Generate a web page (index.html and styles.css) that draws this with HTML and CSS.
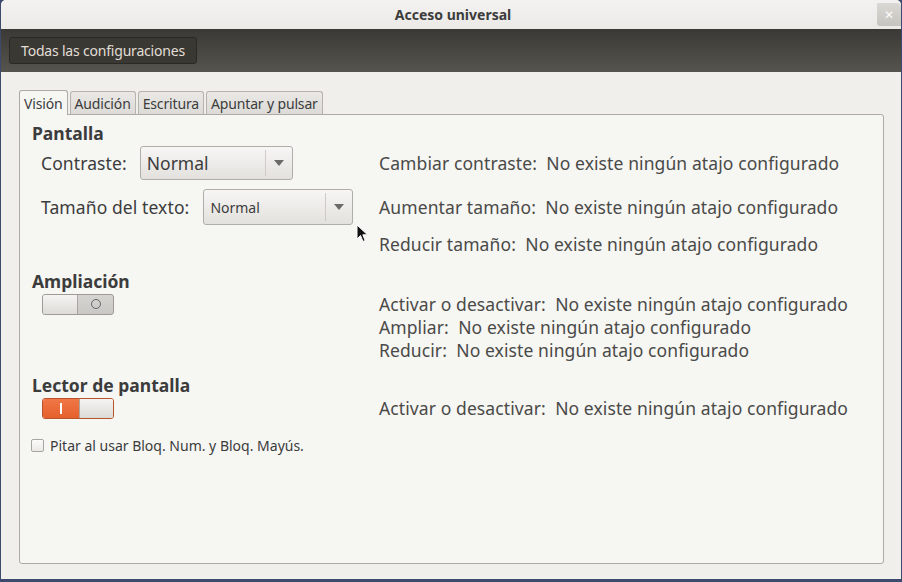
FILE: index.html
```html
<!DOCTYPE html>
<html lang="es">
<head>
<meta charset="utf-8">
<title>Acceso universal</title>
<link rel="stylesheet" href="styles.css">
</head>
<body>
<div class="window">
  <div class="titlebar">
    <span class="title">Acceso universal</span>
    <span class="close">&#x2715;</span>
  </div>
  <div class="toolbar">
    <button class="tb-btn">Todas las configuraciones</button>
  </div>
  <div class="content">
    <div class="tabs">
      <div class="tab active">Visión</div>
      <div class="tab">Audición</div>
      <div class="tab">Escritura</div>
      <div class="tab">Apuntar y pulsar</div>
    </div>
    <div class="panel">
      <div class="row r1">
        <div class="left"><span class="heading">Pantalla</span></div>
        <div class="right"></div>
      </div>
      <div class="row r2">
        <div class="left"><span class="label">Contraste:</span>
          <div class="combo combo-a"><span class="combo-text">Normal</span><span class="combo-sep"></span><span class="arrow"></span></div>
        </div>
        <div class="right shortcut">Cambiar contraste:&nbsp; No existe ningún atajo configurado</div>
      </div>
      <div class="row r3">
        <div class="left"><span class="label">Tamaño del texto:</span>
          <div class="combo combo-b"><span class="combo-text small">Normal</span><span class="combo-sep"></span><span class="arrow"></span></div>
        </div>
        <div class="right shortcut">Aumentar tamaño:&nbsp; No existe ningún atajo configurado</div>
      </div>
      <div class="row r4">
        <div class="left"></div>
        <div class="right shortcut">Reducir tamaño:&nbsp; No existe ningún atajo configurado</div>
      </div>
      <div class="row r5">
        <div class="left"><span class="heading">Ampliación</span></div>
        <div class="right"></div>
      </div>
      <div class="row r6">
        <div class="left"><div class="switch off"><span class="knob"></span><span class="state"><span class="ring"></span></span></div></div>
        <div class="right shortcut">Activar o desactivar:&nbsp; No existe ningún atajo configurado</div>
      </div>
      <div class="row r7">
        <div class="left"></div>
        <div class="right shortcut">Ampliar:&nbsp; No existe ningún atajo configurado</div>
      </div>
      <div class="row r7">
        <div class="left"></div>
        <div class="right shortcut">Reducir:&nbsp; No existe ningún atajo configurado</div>
      </div>
      <div class="row r9">
        <div class="left"><span class="heading">Lector de pantalla</span></div>
        <div class="right"></div>
      </div>
      <div class="row r7">
        <div class="left"><div class="switch on"><span class="state-on"><span class="bar"></span></span><span class="knob"></span></div></div>
        <div class="right shortcut">Activar o desactivar:&nbsp; No existe ningún atajo configurado</div>
      </div>
      <div class="row r11">
        <label class="check"><span class="box"></span><span class="check-label">Pitar al usar Bloq. Num. y Bloq. Mayús.</span></label>
      </div>
    </div>
  </div>
  <svg class="cursor" width="13" height="20" viewBox="0 0 13 20"><path d="M1 1 L1 15 L4.5 11.5 L7 17.5 L9.2 16.5 L6.8 10.8 L11.5 10.8 Z" fill="#111" stroke="#fff" stroke-width="1"/></svg>
</div>
</body>
</html>
```
FILE: styles.css
```css
* { box-sizing: border-box; }
html, body { margin: 0; padding: 0; }
body {
  width: 902px; height: 582px; overflow: hidden;
  background: #3d4a6e;
  font-family: "Noto Sans", "DejaVu Sans", sans-serif;
  color: #3c3c3c;
}
.window {
  position: relative;
  margin-left: 1px;
  width: 900px; height: 579px;
  background: #f0efed;
  border-radius: 5px 5px 0 0;
  display: flex; flex-direction: column;
  overflow: hidden;
}
.titlebar {
  height: 29px;
  background: linear-gradient(#f3f2f0, #ebeae7);
  display: flex; align-items: center; justify-content: center;
  position: relative;
}
.title { font-size: 14px; font-weight: bold; color: #3c3c3c; margin-left: 4px; }
.close {
  position: absolute; right: 0; top: 3px;
  width: 24px; height: 23px;
  background: linear-gradient(#dad8d4, #c6c4bf);
  border-radius: 0 4px 0 3px;
  color: #fbfbfa; font-size: 12px; font-weight: bold;
  display: flex; align-items: center; justify-content: center;
}
.toolbar {
  height: 43px;
  background: linear-gradient(#3a3935, #56544e);
  display: flex; align-items: center;
  padding-left: 8px;
}
.tb-btn {
  height: 27px; width: 188px;
  background: #393833;
  border: 1px solid #2a2925;
  border-radius: 3px;
  color: #e2ded6;
  font-family: inherit; font-size: 14px;
  padding: 0 0 1px 0; letter-spacing: -0.2px;
}
.content {
  flex: 1;
  background: #f0efec;
  padding: 18px 17px 15px 18px;
  display: flex; flex-direction: column;
}
.tabs { display: flex; gap: 2px; align-items: flex-end; height: 24px; position: relative; z-index: 1; }
.tab {
  height: 23px;
  padding: 0 4px;
  border: 1px solid #b6b3ae; border-bottom: none;
  border-radius: 3px 3px 0 0;
  background: linear-gradient(#eae8e5, #dddbd7);
  font-size: 14px; color: #3c3c3c; letter-spacing: -0.15px;
  display: flex; align-items: center;
}
.tab.active {
  height: 25px;
  background: #f6f6f3;
  border-color: #aeaba6;
  margin-bottom: -1px;
}
.panel {
  flex: 1;
  background: #f6f6f3;
  border: 1px solid #aeaba6;
  border-radius: 0 3px 3px 3px;
  padding: 7px 0 0 12px;
  display: flex; flex-direction: column;
}
.row { display: flex; align-items: center; height: 22px; }
.r2 { height: 34px; margin-top: 2px; }
.r3 { height: 36px; margin-top: 9px; }
.r4 { margin-top: 8px; }
.r5 { margin-top: 15px; }
.r6 { margin-top: 1px; }
.r7 { margin-top: 1px; }
.r9 { margin-top: 13px; }
.r11 { margin-top: 15px; }
.left { width: 347px; flex: none; display: flex; align-items: center; height: 100%; }
.right { flex: 1; }
.heading { font-size: 17.5px; font-weight: bold; color: #3c3c3c; }
.label { font-size: 17.5px; margin-left: 9px; color: #3c3c3c; letter-spacing: 0.1px; }
.shortcut { font-size: 17.5px; color: #4a4a48; letter-spacing: 0.1px; white-space: nowrap; }
.combo {
  position: relative;
  height: 100%;
  border: 1px solid #b1aea9;
  border-radius: 3px;
  background: linear-gradient(#f7f6f5, #e3e1dd);
  display: flex; align-items: center;
}
.combo-a { margin-left: 13px; width: 153px; }
.combo-b { margin-left: 14px; width: 150px; }
.combo-text { padding-left: 6px; font-size: 17.5px; color: #3c3c3c; flex: 1; }
.combo-text.small { font-size: 14px; }
.combo-sep { width: 1px; align-self: stretch; margin: 3px 0; background: #cfccc7; }
.arrow {
  width: 0; height: 0; margin: 0 8px 0 8px;
  border-left: 5px solid transparent; border-right: 5px solid transparent;
  border-top: 6px solid #6a6a68;
}
.switch {
  margin-left: 10px;
  width: 72px; height: 21px;
  border: 1px solid #9e9b96;
  border-radius: 3px;
  display: flex; overflow: hidden;
}
.switch.off { background: linear-gradient(#d6d4d0, #cac8c4); }
.switch .knob {
  width: 35px; height: 100%;
  background: linear-gradient(#f5f4f2, #dddbd7);
  border-right: 1px solid #a9a6a1;
}
.switch.on .knob { border-right: none; border-left: 1px solid #a9a6a1; }
.switch .state { flex: 1; display: flex; align-items: center; justify-content: center; }
.ring { width: 10px; height: 10px; border: 1px solid #666; border-radius: 50%; }
.switch.on { border-color: #b8542b; }
.state-on {
  width: 37px; height: 100%;
  background: linear-gradient(#f07746, #e5602c);
  display: flex; align-items: center; justify-content: center;
}
.bar { width: 2px; height: 11px; background: #fff; }
.check { display: flex; align-items: center; margin-left: -1px; }
.box {
  width: 13px; height: 13px;
  border: 1px solid #a9a6a1; border-radius: 2px;
  background: linear-gradient(#fbfbfa, #ebe9e6);
}
.check-label { margin-left: 6px; font-size: 14px; color: #3c3c3c; }
.cursor { position: absolute; left: 355px; top: 224px; }
```
